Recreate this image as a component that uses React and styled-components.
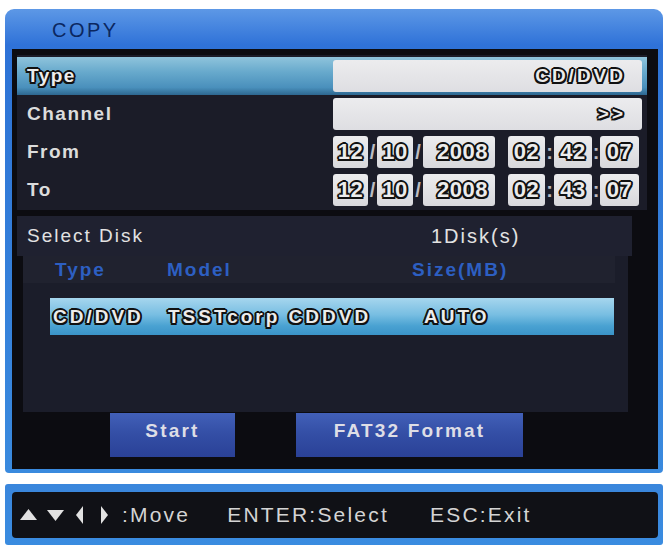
import React from "react";
import styled, { createGlobalStyle, css } from "styled-components";

const GlobalStyle = createGlobalStyle`
  html, body { margin: 0; padding: 0; background: #ffffff; }
  body { font-family: "Liberation Sans", Arial, sans-serif; }
  * { box-sizing: border-box; }
`;

const outline = css`
  color: #ececec;
  text-shadow:
    -1.5px -1.5px 0 #111, 1.5px -1.5px 0 #111, -1.5px 1.5px 0 #111, 1.5px 1.5px 0 #111,
    0 -2px 0 #111, 0 2px 0 #111, -2px 0 0 #111, 2px 0 0 #111;
`;

const Page = styled.div`
  width: 671px;
  height: 548px;
  padding: 9px 0 0 5px;
  display: flex;
  flex-direction: column;
  gap: 11px;
`;

const Window = styled.div`
  width: 658px;
  height: 464px;
  border-radius: 9px 9px 4px 4px;
  background: linear-gradient(180deg, #5d98e6 0px, #2f72d8 36px, #2e74d6 60px, #3a8ade 100%);
  padding: 0 5px 4px 7px;
  display: flex;
  flex-direction: column;
`;

const TitleBar = styled.div`
  height: 40px;
  display: flex;
  align-items: center;
  padding: 2px 0 0 40px;
  font-size: 20px;
  letter-spacing: 2.5px;
  color: #0b2760;
`;

const Inner = styled.div`
  flex: 1;
  background: #0c0c11;
  display: flex;
  flex-direction: column;
`;

const TopSection = styled.div`
  margin: 6px 11px 0 5px;
  padding: 2px 0 1px;
  background: #1b1c28;
  display: flex;
  flex-direction: column;
`;

const Row = styled.div`
  height: 38px;
  display: grid;
  grid-template-columns: 316px 1fr;
  align-items: center;
  padding-right: 5px;
  ${(p) =>
    p.$active &&
    css`
      background: linear-gradient(180deg, #8fc4dc 0%, #67a9cc 40%, #4a90bc 80%, #2d6790 100%);
    `}
`;

const Label = styled.div`
  padding-left: 10px;
  font-size: 19px;
  font-weight: bold;
  letter-spacing: 1.5px;
  color: #dcdcdc;
  ${(p) => p.$active && outline}
`;

const ValueBox = styled.div`
  height: 32px;
  background: linear-gradient(180deg, #ececee, #dedee2);
  border-radius: 3px;
  display: flex;
  align-items: center;
  justify-content: flex-end;
  padding-right: 16px;
  font-size: 19px;
  font-weight: bold;
  letter-spacing: 3px;
  ${outline}
`;

const DateLine = styled.div`
  height: 32px;
  display: flex;
  align-items: stretch;
`;

const Field = styled.div`
  width: ${(p) => p.$w}px;
  background: linear-gradient(180deg, #ececee, #d8d8dc);
  border-radius: 3px;
  display: flex;
  align-items: center;
  justify-content: ${(p) => (p.$right ? "flex-end" : "center")};
  padding-right: ${(p) => (p.$right ? 7 : 0)}px;
  font-size: 22px;
  font-weight: bold;
  letter-spacing: 0.5px;
  ${outline}
`;

const Sep = styled.div`
  width: ${(p) => p.$w}px;
  display: flex;
  align-items: center;
  justify-content: center;
  font-size: 20px;
  font-weight: bold;
  color: #bdbdc2;
`;

const DiskRow = styled.div`
  margin: 6px 0 0 5px;
  width: 615px;
  height: 40px;
  background: #1f2130;
  display: grid;
  grid-template-columns: 404px 1fr;
  align-items: center;
  padding-left: 10px;
  font-size: 19px;
  letter-spacing: 2px;
  color: #e2e2e2;
`;

const DiskCount = styled.span`
  font-size: 20px;
`;

const ListPanel = styled.div`
  margin-left: 11px;
  width: 605px;
  height: 156px;
  background: #1b1d2a;
  display: flex;
  flex-direction: column;
`;

const ListHeader = styled.div`
  width: 592px;
  height: 27px;
  background: #20222f;
  display: grid;
  grid-template-columns: 112px 245px 1fr;
  align-items: center;
  padding-left: 32px;
  font-size: 19px;
  font-weight: bold;
  letter-spacing: 2px;
  color: #2d5fc2;
`;

const SelectedItem = styled.div`
  margin: 15px 0 0 27px;
  width: 564px;
  height: 37px;
  background: linear-gradient(180deg, #a6d6ee 0%, #78bee2 45%, #4aa2d2 75%, #3a94c8 100%);
  display: grid;
  grid-template-columns: 115px 256px 1fr;
  align-items: center;
  padding-left: 3px;
  font-size: 19px;
  font-weight: bold;
  letter-spacing: 3px;
  ${outline}
`;

const ButtonRow = styled.div`
  margin-top: 1px;
  display: flex;
  gap: 61px;
  padding-left: 98px;
`;

const Button = styled.div`
  width: ${(p) => p.$w}px;
  height: 44px;
  background: linear-gradient(180deg, #4260b8 0%, #344fa6 45%, #2a4197 100%);
  display: flex;
  align-items: center;
  justify-content: center;
  padding-bottom: 8px;
  font-size: 19px;
  font-weight: bold;
  letter-spacing: 2.2px;
  color: #dedee6;
`;

const BottomBar = styled.div`
  width: 658px;
  height: 61px;
  border-radius: 3px;
  background: linear-gradient(180deg, #3a86dc, #3a8ce0);
  padding: 8px 5px 7px 7px;
  display: flex;
`;

const BarInner = styled.div`
  flex: 1;
  background: #101116;
  border-radius: 4px;
  display: flex;
  align-items: center;
  padding-left: 8px;
  font-size: 21px;
  letter-spacing: 2.2px;
  color: #d4d4d4;
`;

const Hint = styled.div`
  display: flex;
  align-items: center;
  margin-left: ${(p) => p.$ml || 0}px;
`;

const Arrows = styled.svg`
  display: block;
`;

export default function App() {
  return (
    <>
      <GlobalStyle />
      <Page>
        <Window>
          <TitleBar>COPY</TitleBar>
          <Inner>
            <TopSection>
              <Row $active>
                <Label $active>Type</Label>
                <ValueBox>CD/DVD</ValueBox>
              </Row>
              <Row>
                <Label>Channel</Label>
                <ValueBox>&gt;&gt;</ValueBox>
              </Row>
              <Row>
                <Label>From</Label>
                <DateLine>
                  <Field $w={35}>12</Field>
                  <Sep $w={9}>/</Sep>
                  <Field $w={36}>10</Field>
                  <Sep $w={10}>/</Sep>
                  <Field $w={72} $right>2008</Field>
                  <Sep $w={13} />
                  <Field $w={37}>02</Field>
                  <Sep $w={9}>:</Sep>
                  <Field $w={38}>42</Field>
                  <Sep $w={8}>:</Sep>
                  <Field $w={39}>07</Field>
                </DateLine>
              </Row>
              <Row>
                <Label>To</Label>
                <DateLine>
                  <Field $w={35}>12</Field>
                  <Sep $w={9}>/</Sep>
                  <Field $w={36}>10</Field>
                  <Sep $w={10}>/</Sep>
                  <Field $w={72} $right>2008</Field>
                  <Sep $w={13} />
                  <Field $w={37}>02</Field>
                  <Sep $w={9}>:</Sep>
                  <Field $w={38}>43</Field>
                  <Sep $w={8}>:</Sep>
                  <Field $w={39}>07</Field>
                </DateLine>
              </Row>
            </TopSection>
            <DiskRow>
              <span>Select Disk</span>
              <DiskCount>1Disk(s)</DiskCount>
            </DiskRow>
            <ListPanel>
              <ListHeader>
                <span>Type</span>
                <span>Model</span>
                <span>Size(MB)</span>
              </ListHeader>
              <SelectedItem>
                <span>CD/DVD</span>
                <span>TSSTcorp CDDVD</span>
                <span>AUTO</span>
              </SelectedItem>
            </ListPanel>
            <ButtonRow>
              <Button $w={125}>Start</Button>
              <Button $w={227}>FAT32 Format</Button>
            </ButtonRow>
          </Inner>
        </Window>
        <BottomBar>
          <BarInner>
            <Hint>
              <Arrows width="102" height="22" viewBox="0 0 102 22">
                <polygon points="0,16 8.5,5 17,16" fill="#e2e2e2" />
                <polygon points="27,6 44,6 35.5,17" fill="#e2e2e2" />
                <polygon points="56,11 63,2 63,20" fill="#e2e2e2" />
                <polygon points="88,11 81,2 81,20" fill="#e2e2e2" />
              </Arrows>
              <span>:Move</span>
            </Hint>
            <Hint $ml={37}>ENTER:Select</Hint>
            <Hint $ml={41}>ESC:Exit</Hint>
          </BarInner>
        </BottomBar>
      </Page>
    </>
  );
}
